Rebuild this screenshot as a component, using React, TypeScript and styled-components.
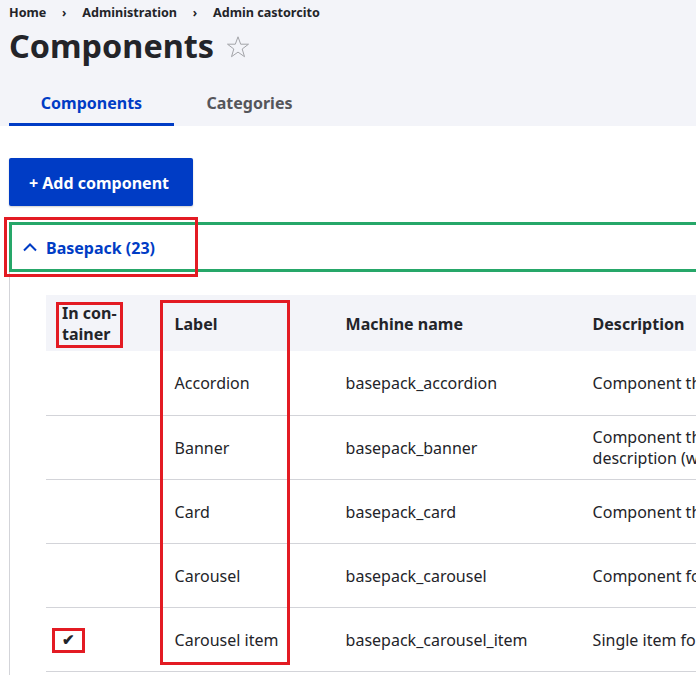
import React from 'react';
import styled, { createGlobalStyle } from 'styled-components';

const GlobalStyle = createGlobalStyle`
  html, body {
    margin: 0;
    padding: 0;
    background: #fff;
    overflow: hidden;
  }
  body {
    font-family: "Noto Sans", "Open Sans", sans-serif;
    color: #232429;
  }
`;

const Page = styled.div`
  position: relative;
  width: 696px;
  height: 675px;
  overflow: hidden;
  background: #fff;
`;

const Header = styled.header`
  height: 126px;
  padding: 0 9px;
  box-sizing: border-box;
  background: #f3f4f9;
  display: flex;
  flex-direction: column;
`;

const Breadcrumb = styled.nav`
  display: flex;
  align-items: center;
  height: 24px;
  padding-bottom: 0;
  box-sizing: border-box;
  font-size: 12.6px;
  font-weight: 700;
  color: #232429;
`;

const Crumb = styled.span`
  white-space: nowrap;
`;

const CrumbSep = styled.span`
  width: 36px;
  text-align: center;
  font-size: 12px;
`;

const TitleRow = styled.div`
  display: flex;
  align-items: center;
  gap: 12px;
  height: 43px;
`;

const Title = styled.h1`
  margin: 0;
  font-size: 32.4px;
  line-height: 43px;
  font-weight: 700;
  color: #232429;
`;

const Star = styled.svg`
  width: 24px;
  height: 24px;
  margin-top: 2px;
`;

const Tabs = styled.div`
  display: flex;
  margin-top: auto;
`;

const Tab = styled.div<{ $active?: boolean }>`
  width: ${(p) => (p.$active ? '165px' : '151px')};
  height: 43px;
  box-sizing: border-box;
  padding-bottom: 1px;
  display: flex;
  align-items: center;
  justify-content: center;
  font-size: 16px;
  font-weight: 700;
  color: ${(p) => (p.$active ? '#003cc5' : '#55565b')};
  border-bottom: 3px solid ${(p) => (p.$active ? '#003cc5' : 'transparent')};
`;

const Content = styled.main`
  padding: 32px 0 0 9px;
`;

const AddButton = styled.button`
  display: block;
  width: 184px;
  height: 48px;
  padding: 2px 4px 0 0;
  border: 0;
  border-radius: 2px;
  background: #003cc5;
  color: #fff;
  font-family: inherit;
  font-size: 16px;
  font-weight: 700;
  box-shadow: 0 1px 2px rgba(0, 0, 0, 0.2);
`;

const Group = styled.section`
  margin-top: 16px;
  width: 1100px;
`;

const GroupHead = styled.div`
  height: 50px;
  box-sizing: border-box;
  border: 3px solid #26a769;
  border-right: 0;
  display: flex;
  align-items: center;
  gap: 8px;
  padding: 2px 0 0 10px;
  font-size: 16px;
  font-weight: 700;
  color: #003cc5;
`;

const Chevron = styled.svg`
  width: 16px;
  height: 16px;
  margin-top: -2px;
`;

const GroupBody = styled.div`
  border-left: 1px solid #d3d4d9;
  padding: 23px 0 40px 36px;
`;

const Table = styled.table`
  border-collapse: collapse;
  table-layout: fixed;
  width: 1000px;
  font-size: 16px;
  line-height: 21px;
`;

const HeadRow = styled.tr`
  height: 56px;
  background: #f3f4f9;
`;

const Th = styled.th<{ $w: number; $narrow?: boolean }>`
  width: ${(p) => p.$w}px;
  box-sizing: border-box;
  padding: 2px 0 0 ${(p) => (p.$narrow ? 16 : 12.6)}px;
  text-align: left;
  font-weight: 700;
  color: #232429;
`;

const Row = styled.tr`
  height: 64px;
  border-bottom: 1px solid #d3d4d9;
`;

const Td = styled.td`
  padding: 2px 0 0 12.6px;
  color: #232429;
  white-space: nowrap;
  overflow: hidden;
`;

const CheckCell = styled(Td)`
  padding-left: 16px;
  padding-top: 0;
  font-size: 15px;
  font-weight: 700;
`;

const Annotation = styled.div<{ $x: number; $y: number; $w: number; $h: number }>`
  position: absolute;
  left: ${(p) => p.$x}px;
  top: ${(p) => p.$y}px;
  width: ${(p) => p.$w}px;
  height: ${(p) => p.$h}px;
  box-sizing: border-box;
  border: 3px solid #e31b23;
  pointer-events: none;
`;

const rows = [
  { label: 'Accordion', machine: 'basepack_accordion', desc: 'Component that displays an accordion' },
  { label: 'Banner', machine: 'basepack_banner', desc: 'Component that displays a banner', extra: 'description (with image)' },
  { label: 'Card', machine: 'basepack_card', desc: 'Component that displays a card' },
  { label: 'Carousel', machine: 'basepack_carousel', desc: 'Component for a carousel' },
  { label: 'Carousel item', machine: 'basepack_carousel_item', desc: 'Single item for a carousel', inContainer: true },
];

const App = () => {
  return (
    <Page>
      <GlobalStyle />
      <Header>
        <Breadcrumb>
          <Crumb>Home</Crumb>
          <CrumbSep>›</CrumbSep>
          <Crumb>Administration</Crumb>
          <CrumbSep>›</CrumbSep>
          <Crumb>Admin castorcito</Crumb>
        </Breadcrumb>
        <TitleRow>
          <Title>Components</Title>
          <Star viewBox="0 0 24 24" fill="none" stroke="#a3a4a9" strokeWidth="1">
            <path d="M12 1.8l2.7 7.4h7.8l-6.3 4.8 2.3 7.7-6.5-4.6-6.5 4.6 2.3-7.7-6.3-4.8h7.8z" />
          </Star>
        </TitleRow>
        <Tabs>
          <Tab $active>Components</Tab>
          <Tab>Categories</Tab>
        </Tabs>
      </Header>
      <Content>
        <AddButton>+ Add component</AddButton>
        <Group>
          <GroupHead>
            <Chevron viewBox="0 0 16 16" fill="none" stroke="#003cc5" strokeWidth="2">
              <path d="M2 11.5l6-6 6 6" />
            </Chevron>
            Basepack (23)
          </GroupHead>
          <GroupBody>
            <Table>
              <thead>
                <HeadRow>
                  <Th $w={116} $narrow>In con-<br />tainer</Th>
                  <Th $w={171}>Label</Th>
                  <Th $w={247}>Machine name</Th>
                  <Th $w={466}>Description</Th>
                </HeadRow>
              </thead>
              <tbody>
                {rows.map((row) => (
                  <Row key={row.machine}>
                    <CheckCell>{row.inContainer ? '✔' : ''}</CheckCell>
                    <Td>{row.label}</Td>
                    <Td>{row.machine}</Td>
                    <Td>
                      {row.desc}
                      {row.extra && <br />}
                      {row.extra}
                    </Td>
                  </Row>
                ))}
              </tbody>
            </Table>
          </GroupBody>
        </Group>
      </Content>
      <Annotation $x={4} $y={217} $w={194} $h={60} />
      <Annotation $x={56} $y={302} $w={67} $h={46} />
      <Annotation $x={160} $y={300} $w={130} $h={365} />
      <Annotation $x={52} $y={628} $w={33} $h={25} />
    </Page>
  );
};

export default App;
